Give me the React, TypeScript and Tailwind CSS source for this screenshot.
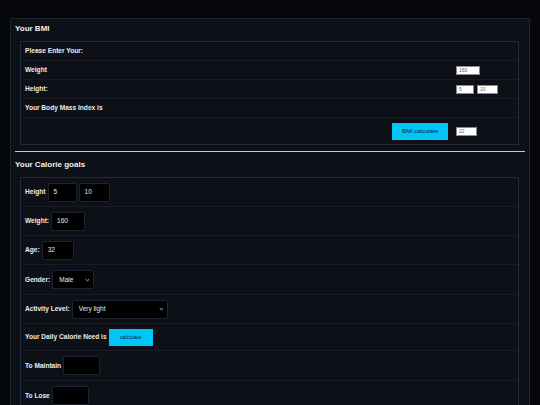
import React from "react"

const font = { fontFamily: '"Liberation Sans", Arial, sans-serif' }

const BmiRow = ({ label, right }: { label?: React.ReactNode; right?: React.ReactNode }) => (
  <div className="grid grid-cols-[1fr_62px] items-center h-[19px] border-b border-[#171c24]">
    <div className="pl-[4px] text-[6.6px] font-bold text-[#ececec]">{label}</div>
    <div className="flex items-center gap-[3px]">{right}</div>
  </div>
)

const WhiteInput = ({ value, w }: { value: string; w: string }) => (
  <div className={`${w} h-[9px] bg-white border border-[#8a8a8a] text-[5px] leading-[7px] text-[#666] pl-[2px]`}>{value}</div>
)

const DarkInput = ({ value, w }: { value?: string; w: string }) => (
  <div className={`${w} h-[19px] bg-black border border-[#1b2430] rounded-[2px] text-[6.5px] text-[#e8e8e8] flex items-center pl-[5px]`}>{value}</div>
)

const DarkSelect = ({ value, w }: { value: string; w: string }) => (
  <div className={`${w} h-[19px] bg-black border border-[#1b2430] rounded-[2px] text-[6.5px] text-[#e8e8e8] flex items-center justify-between pl-[6px] pr-[3px]`}>
    <span>{value}</span>
    <svg width="5" height="4" viewBox="0 0 5 4">
      <path d="M0.8 1.2 L2.5 2.8 L4.2 1.2" stroke="#d0d0d0" strokeWidth="0.9" fill="none" />
    </svg>
  </div>
)

// heights include the 1px bottom border (border-box)
const CalRow = ({ h, children, last }: { h: string; children: React.ReactNode; last?: boolean }) => (
  <div className={`${h} flex items-center pl-[4px] gap-[2px] ${last ? "" : "border-b border-[#171c24]"}`}>{children}</div>
)

const Label = ({ children }: { children: React.ReactNode }) => (
  <span className="text-[6.6px] font-bold text-[#ececec] whitespace-nowrap">{children}</span>
)

export default function App() {
  return (
    <div className="min-h-screen bg-[#05070b] pt-[18px] px-[10px]" style={font}>
      <div className="h-[400px] border border-[#1c2430] bg-[#0d1117] pt-[2px]">
        <div className="h-[15px] leading-[15px] pl-[4px] text-[8px] font-bold text-[#f0f0f0]">Your BMI</div>
        <div className="mt-[5px] ml-[9px] mr-[10px] border border-[#1e2b3b]">
          <BmiRow label="Please Enter Your:" />
          <BmiRow label="Weight" right={<WhiteInput value="160" w="w-[24px]" />} />
          <BmiRow
            label="Height:"
            right={
              <>
                <WhiteInput value="5" w="w-[18px]" />
                <WhiteInput value="10" w="w-[21px]" />
              </>
            }
          />
          <BmiRow label="Your Body Mass Index is" />
          <div className="grid grid-cols-[1fr_62px] items-center h-[26px]">
            <div className="flex justify-end pr-[8px]">
              <div className="w-[56px] h-[17px] bg-[#00c6f8] flex items-center justify-center text-[6px] text-[#0a2530]">BMI calculate</div>
            </div>
            <div>
              <WhiteInput value="22" w="w-[21px]" />
            </div>
          </div>
        </div>
        <div className="mt-[6px] mx-[4px] h-px bg-[#c6c9ce]" />
        <div className="h-[25px] leading-[25px] pl-[4px] text-[8px] font-bold text-[#f0f0f0]">Your Calorie goals</div>
        <div className="ml-[9px] mr-[10px] border border-[#1e2b3b]">
          <CalRow h="h-[29px]">
            <Label>Height</Label>
            <DarkInput value="5" w="w-[29px]" />
            <DarkInput value="10" w="w-[31px]" />
          </CalRow>
          <CalRow h="h-[29px]">
            <Label>Weight:</Label>
            <DarkInput value="160" w="w-[34px]" />
          </CalRow>
          <CalRow h="h-[29px]">
            <Label>Age:</Label>
            <DarkInput value="32" w="w-[32px]" />
          </CalRow>
          <CalRow h="h-[30px]">
            <Label>Gender:</Label>
            <DarkSelect value="Male" w="w-[42px]" />
          </CalRow>
          <CalRow h="h-[29px]">
            <Label>Activity Level:</Label>
            <DarkSelect value="Very light" w="w-[96px]" />
          </CalRow>
          <CalRow h="h-[27px]">
            <Label>Your Daily Calorie Need is</Label>
            <div className="w-[44px] h-[17px] bg-[#00c6f8] flex items-center justify-center text-[5.5px] text-[#0a2530]">calculate</div>
          </CalRow>
          <CalRow h="h-[30px]">
            <Label>To Maintain</Label>
            <DarkInput w="w-[37px]" />
          </CalRow>
          <CalRow h="h-[29px]" last>
            <Label>To Lose</Label>
            <DarkInput w="w-[37px]" />
          </CalRow>
        </div>
      </div>
    </div>
  )
}
